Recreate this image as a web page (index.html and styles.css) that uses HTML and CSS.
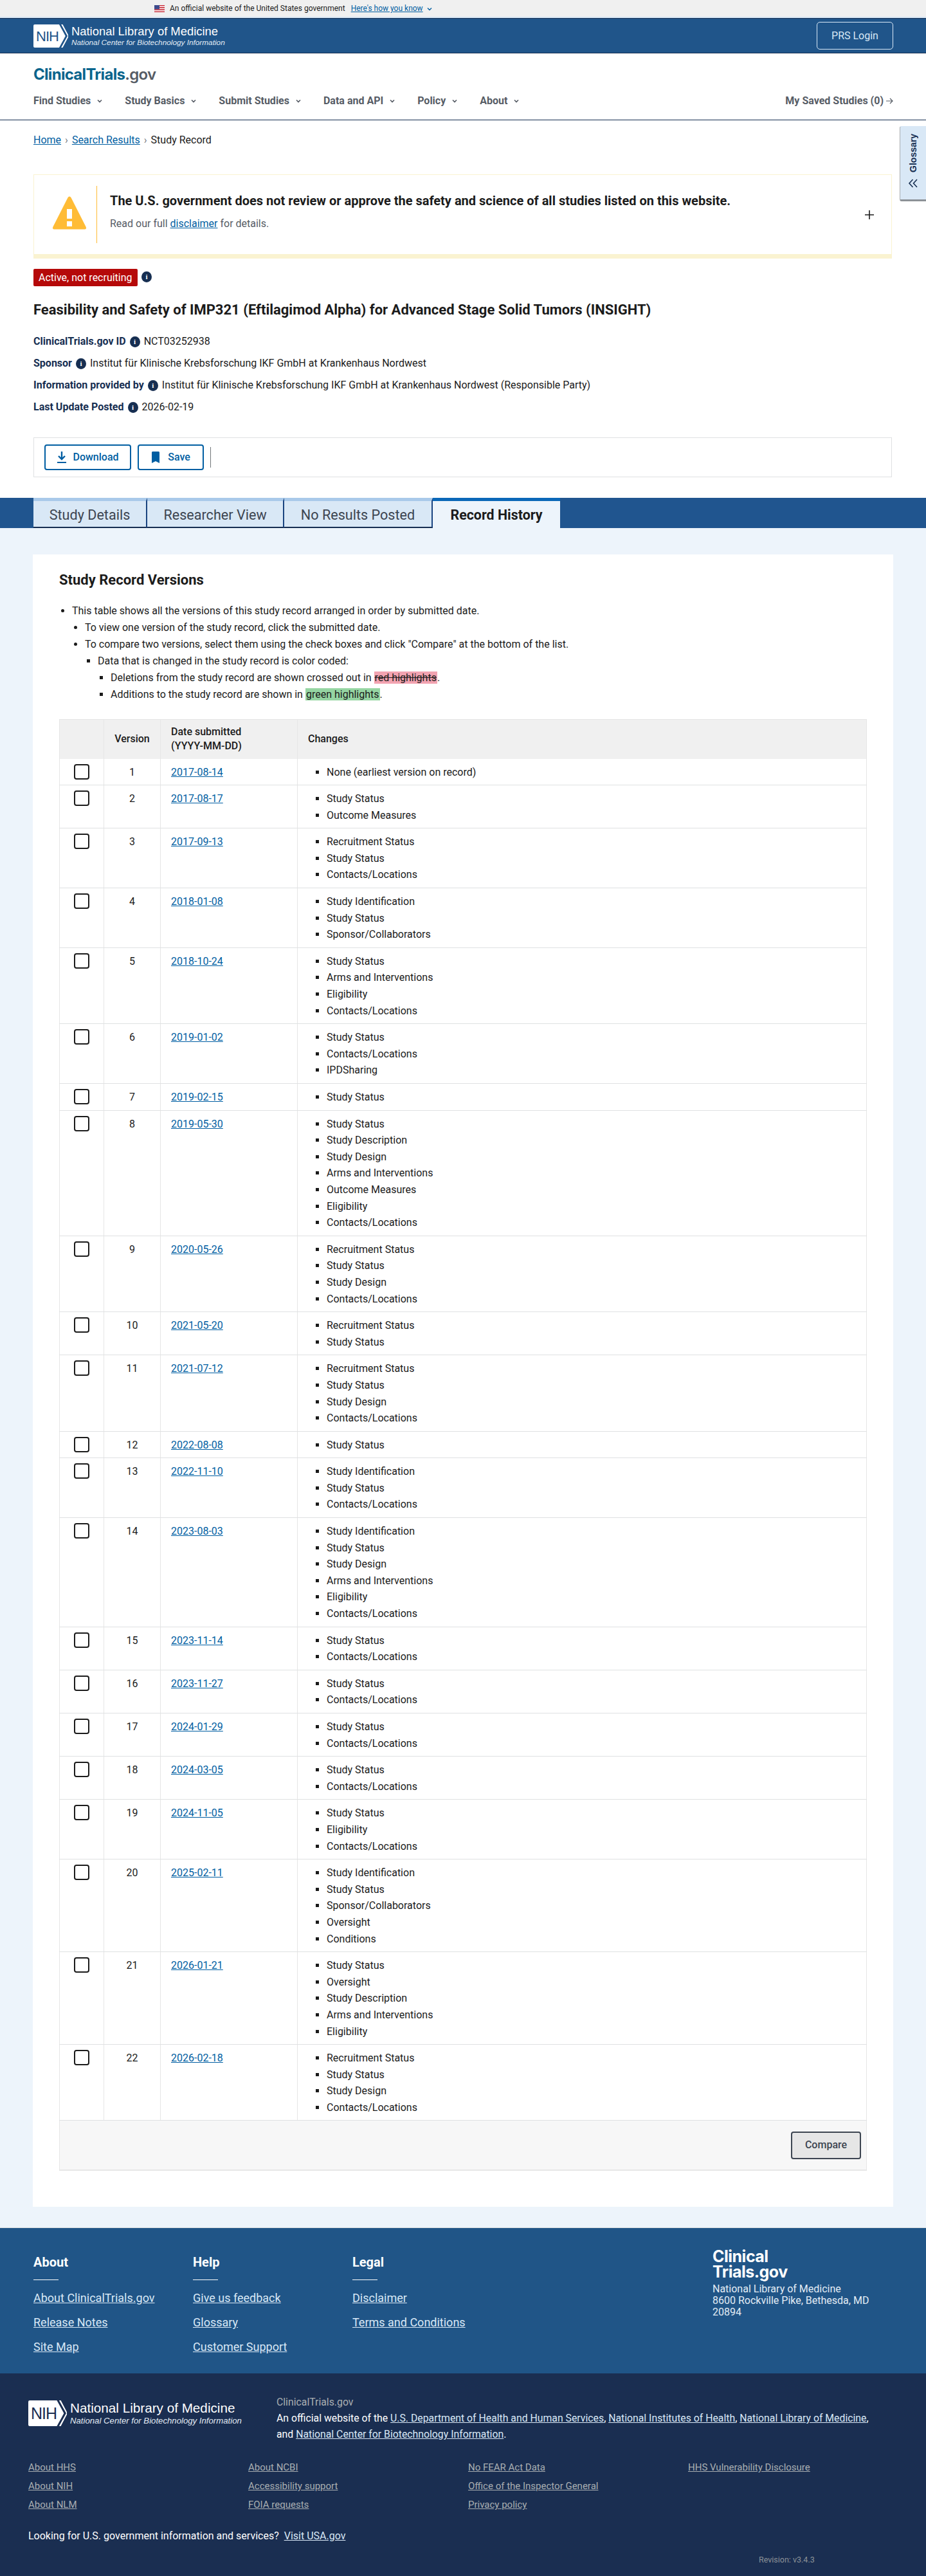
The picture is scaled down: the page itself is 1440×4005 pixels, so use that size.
FILE: index.html
```html
<!DOCTYPE html>
<html lang="en">
<head>
<meta charset="utf-8">
<title>Study Record | ClinicalTrials.gov</title>
<link rel="stylesheet" href="styles.css">
</head>
<body>
<div class="gov-banner">
  <svg class="flag" width="16" height="11" viewBox="0 0 16 11"><rect width="16" height="11" fill="#fff"/><path d="M0 0h16v1.6H0zM0 3.1h16v1.6H0zM0 6.3h16v1.6H0zM0 9.4h16V11H0z" fill="#c8313e"/><rect width="8" height="6.3" fill="#3c4a8c"/></svg>
  <span class="gov-text">An official website of the United States government</span>
  <a class="gov-link" href="#">Here's how you know</a>
  <svg class="gov-chev" width="10" height="10" viewBox="0 0 10 10"><path d="M2 3.5l3 3 3-3" fill="none" stroke="#005ea2" stroke-width="1.4"/></svg>
</div>
<header class="nih-bar">
  <div class="nih-logo">
    <div class="nih-mark">
      <svg class="nih-svg" width="54" height="36" viewBox="0 0 54 36"><path d="M2 0h38l10 18-10 18H2a2 2 0 0 1-2-2V2a2 2 0 0 1 2-2z" fill="#fff"/><path d="M42-1l10.500 19L42 37h3l10-19L45-1z" fill="#fff"/><path d="M40-1h2.500l10.500 19-10.500 19H40l10-19z" fill="#20558a"/></svg>
      <span class="nih-letters">NIH</span>
    </div>
    <div class="nih-words">
      <div class="nih-title">National Library of Medicine</div>
      <div class="nih-sub">National Center for Biotechnology Information</div>
    </div>
  </div>
  <a class="prs" href="#">PRS Login</a>
</header>
<div class="site-head">
  <div class="brand"><span class="brand-main">ClinicalTrials</span><span class="brand-gov">.gov</span></div>
  <nav class="main-nav">
    <a class="nav-item nav-find" href="#">Find Studies<svg class="chev" width="10" height="10" viewBox="0 0 10 10"><path d="M2 3.500l3 3 3-3" fill="none" stroke="#565c65" stroke-width="1.700"/></svg></a>
    <a class="nav-item nav-basics" href="#">Study Basics<svg class="chev" width="10" height="10" viewBox="0 0 10 10"><path d="M2 3.500l3 3 3-3" fill="none" stroke="#565c65" stroke-width="1.700"/></svg></a>
    <a class="nav-item nav-submit" href="#">Submit Studies<svg class="chev" width="10" height="10" viewBox="0 0 10 10"><path d="M2 3.500l3 3 3-3" fill="none" stroke="#565c65" stroke-width="1.700"/></svg></a>
    <a class="nav-item nav-data" href="#">Data and API<svg class="chev" width="10" height="10" viewBox="0 0 10 10"><path d="M2 3.500l3 3 3-3" fill="none" stroke="#565c65" stroke-width="1.700"/></svg></a>
    <a class="nav-item nav-policy" href="#">Policy<svg class="chev" width="10" height="10" viewBox="0 0 10 10"><path d="M2 3.500l3 3 3-3" fill="none" stroke="#565c65" stroke-width="1.700"/></svg></a>
    <a class="nav-item" href="#">About<svg class="chev" width="10" height="10" viewBox="0 0 10 10"><path d="M2 3.500l3 3 3-3" fill="none" stroke="#565c65" stroke-width="1.700"/></svg></a>
    <a class="nav-saved" href="#">My Saved Studies (0)<svg class="arrow" width="12" height="12" viewBox="0 0 12 12"><path d="M1 6h10M7 2l4 4-4 4" fill="none" stroke="#565c65" stroke-width="1.200"/></svg></a>
  </nav>
</div>
<aside class="glossary">
  <span class="glossary-text">Glossary</span>
  <svg width="16" height="16" viewBox="0 0 16 16"><path d="M7.500 2L2 8l5.500 6M14 2L8.500 8l5.500 6" fill="none" stroke="#162e51" stroke-width="1.600"/></svg>
</aside>
<main class="top">
  <div class="crumbs"><a href="#">Home</a><span class="sep">›</span><a href="#">Search Results</a><span class="sep">›</span><span>Study Record</span></div>
  <section class="alert">
    <svg class="alert-icon" width="52" height="52" viewBox="0 0 52 52"><path d="M26 1c1 0 1.600.5 2 1.200l23.500 46.300c.8 1.500 0 2.500-1.500 2.500H2c-1.500 0-2.300-1-1.500-2.500L24 2.200C24.400 1.500 25 1 26 1z" fill="#ffbc36" stroke="#ffbc36"/><rect x="22" y="20" width="8" height="15" fill="#fff"/><rect x="22" y="39" width="8" height="8" fill="#fff"/></svg>
    <div class="alert-body">
      <div class="alert-title">The U.S. government does not review or approve the safety and science of all studies listed on this website.</div>
      <div class="alert-sub">Read our full <a href="#">disclaimer</a> for details.</div>
    </div>
    <svg class="alert-plus" width="16" height="16" viewBox="0 0 16 16"><path d="M8 1v14M1 8h14" stroke="#1b1b1b" stroke-width="1.600"/></svg>
  </section>
  <div class="status-row"><span class="badge">Active, not recruiting</span><span class="info">i</span></div>
  <h1 class="title">Feasibility and Safety of IMP321 (Eftilagimod Alpha) for Advanced Stage Solid Tumors (INSIGHT)</h1>
  <div class="meta">
    <div class="meta-row"><span class="meta-label">ClinicalTrials.gov ID</span><span class="info">i</span><span>NCT03252938</span></div>
    <div class="meta-row"><span class="meta-label">Sponsor</span><span class="info">i</span><span>Institut für Klinische Krebsforschung IKF GmbH at Krankenhaus Nordwest</span></div>
    <div class="meta-row"><span class="meta-label">Information provided by</span><span class="info">i</span><span>Institut für Klinische Krebsforschung IKF GmbH at Krankenhaus Nordwest (Responsible Party)</span></div>
    <div class="meta-row"><span class="meta-label">Last Update Posted</span><span class="info">i</span><span>2026-02-19</span></div>
  </div>
  <div class="actions">
    <button class="btn btn-dl"><svg width="16" height="20" viewBox="0 0 16 20"><path d="M8 1v11M3 8l5 5 5-5" fill="none" stroke="#005ea2" stroke-width="2.400"/><path d="M1 18h14" stroke="#005ea2" stroke-width="2"/></svg>Download</button>
    <button class="btn btn-save"><svg width="14" height="18" viewBox="0 0 14 18"><path d="M1 1.500C1 .7 1.700 0 2.500 0h9c.8 0 1.500.7 1.500 1.500V18l-6-3-6 3z" fill="#005ea2"/></svg>Save</button>
    <span class="act-div"></span>
  </div>
</main>
<div class="tabs">
  <a class="tab tab-details" href="#">Study Details</a>
  <a class="tab tab-researcher" href="#">Researcher View</a>
  <a class="tab tab-results" href="#">No Results Posted</a>
  <a class="tab tab-active" href="#">Record History</a>
</div>
<div class="page">
  <section class="card">
    <h2 class="card-title">Study Record Versions</h2>
    <ul class="lvl">
      <li>This table shows all the versions of this study record arranged in order by submitted date.
        <ul class="lvl">
          <li>To view one version of the study record, click the submitted date.</li>
          <li>To compare two versions, select them using the check boxes and click "Compare" at the bottom of the list.
            <ul class="lvl lvl-sq">
              <li>Data that is changed in the study record is color coded:
                <ul class="lvl lvl-sq">
                  <li>Deletions from the study record are shown crossed out in <span class="del">red highlights</span>.</li>
                  <li>Additions to the study record are shown in <span class="add">green highlights</span>.</li>
                </ul>
              </li>
            </ul>
          </li>
        </ul>
      </li>
    </ul>
    <table class="versions">
      <thead>
        <tr><th class="c-check"></th><th class="c-ver">Version</th><th class="c-date">Date submitted<br>(YYYY-MM-DD)</th><th>Changes</th></tr>
      </thead>
      <tbody>
        <tr><td class="c-check"><span class="box"></span></td><td class="c-ver">1</td><td><a href="#">2017-08-14</a></td><td><ul><li>None (earliest version on record)</li></ul></td></tr>
        <tr><td class="c-check"><span class="box"></span></td><td class="c-ver">2</td><td><a href="#">2017-08-17</a></td><td><ul><li>Study Status</li><li>Outcome Measures</li></ul></td></tr>
        <tr><td class="c-check"><span class="box"></span></td><td class="c-ver">3</td><td><a href="#">2017-09-13</a></td><td><ul><li>Recruitment Status</li><li>Study Status</li><li>Contacts/Locations</li></ul></td></tr>
        <tr><td class="c-check"><span class="box"></span></td><td class="c-ver">4</td><td><a href="#">2018-01-08</a></td><td><ul><li>Study Identification</li><li>Study Status</li><li>Sponsor/Collaborators</li></ul></td></tr>
        <tr><td class="c-check"><span class="box"></span></td><td class="c-ver">5</td><td><a href="#">2018-10-24</a></td><td><ul><li>Study Status</li><li>Arms and Interventions</li><li>Eligibility</li><li>Contacts/Locations</li></ul></td></tr>
        <tr><td class="c-check"><span class="box"></span></td><td class="c-ver">6</td><td><a href="#">2019-01-02</a></td><td><ul><li>Study Status</li><li>Contacts/Locations</li><li>IPDSharing</li></ul></td></tr>
        <tr><td class="c-check"><span class="box"></span></td><td class="c-ver">7</td><td><a href="#">2019-02-15</a></td><td><ul><li>Study Status</li></ul></td></tr>
        <tr><td class="c-check"><span class="box"></span></td><td class="c-ver">8</td><td><a href="#">2019-05-30</a></td><td><ul><li>Study Status</li><li>Study Description</li><li>Study Design</li><li>Arms and Interventions</li><li>Outcome Measures</li><li>Eligibility</li><li>Contacts/Locations</li></ul></td></tr>
        <tr><td class="c-check"><span class="box"></span></td><td class="c-ver">9</td><td><a href="#">2020-05-26</a></td><td><ul><li>Recruitment Status</li><li>Study Status</li><li>Study Design</li><li>Contacts/Locations</li></ul></td></tr>
        <tr><td class="c-check"><span class="box"></span></td><td class="c-ver">10</td><td><a href="#">2021-05-20</a></td><td><ul><li>Recruitment Status</li><li>Study Status</li></ul></td></tr>
        <tr><td class="c-check"><span class="box"></span></td><td class="c-ver">11</td><td><a href="#">2021-07-12</a></td><td><ul><li>Recruitment Status</li><li>Study Status</li><li>Study Design</li><li>Contacts/Locations</li></ul></td></tr>
        <tr><td class="c-check"><span class="box"></span></td><td class="c-ver">12</td><td><a href="#">2022-08-08</a></td><td><ul><li>Study Status</li></ul></td></tr>
        <tr><td class="c-check"><span class="box"></span></td><td class="c-ver">13</td><td><a href="#">2022-11-10</a></td><td><ul><li>Study Identification</li><li>Study Status</li><li>Contacts/Locations</li></ul></td></tr>
        <tr><td class="c-check"><span class="box"></span></td><td class="c-ver">14</td><td><a href="#">2023-08-03</a></td><td><ul><li>Study Identification</li><li>Study Status</li><li>Study Design</li><li>Arms and Interventions</li><li>Eligibility</li><li>Contacts/Locations</li></ul></td></tr>
        <tr><td class="c-check"><span class="box"></span></td><td class="c-ver">15</td><td><a href="#">2023-11-14</a></td><td><ul><li>Study Status</li><li>Contacts/Locations</li></ul></td></tr>
        <tr><td class="c-check"><span class="box"></span></td><td class="c-ver">16</td><td><a href="#">2023-11-27</a></td><td><ul><li>Study Status</li><li>Contacts/Locations</li></ul></td></tr>
        <tr><td class="c-check"><span class="box"></span></td><td class="c-ver">17</td><td><a href="#">2024-01-29</a></td><td><ul><li>Study Status</li><li>Contacts/Locations</li></ul></td></tr>
        <tr><td class="c-check"><span class="box"></span></td><td class="c-ver">18</td><td><a href="#">2024-03-05</a></td><td><ul><li>Study Status</li><li>Contacts/Locations</li></ul></td></tr>
        <tr><td class="c-check"><span class="box"></span></td><td class="c-ver">19</td><td><a href="#">2024-11-05</a></td><td><ul><li>Study Status</li><li>Eligibility</li><li>Contacts/Locations</li></ul></td></tr>
        <tr><td class="c-check"><span class="box"></span></td><td class="c-ver">20</td><td><a href="#">2025-02-11</a></td><td><ul><li>Study Identification</li><li>Study Status</li><li>Sponsor/Collaborators</li><li>Oversight</li><li>Conditions</li></ul></td></tr>
        <tr><td class="c-check"><span class="box"></span></td><td class="c-ver">21</td><td><a href="#">2026-01-21</a></td><td><ul><li>Study Status</li><li>Oversight</li><li>Study Description</li><li>Arms and Interventions</li><li>Eligibility</li></ul></td></tr>
        <tr><td class="c-check"><span class="box"></span></td><td class="c-ver">22</td><td><a href="#">2026-02-18</a></td><td><ul><li>Recruitment Status</li><li>Study Status</li><li>Study Design</li><li>Contacts/Locations</li></ul></td></tr>
      </tbody>
    </table>
    <div class="compare-bar"><button class="compare">Compare</button></div>
  </section>
</div>
<footer>
  <div class="foot-blue">
    <div class="foot-col foot-about">
      <h3>About</h3>
      <a href="#">About ClinicalTrials.gov</a>
      <a href="#">Release Notes</a>
      <a href="#">Site Map</a>
    </div>
    <div class="foot-col foot-help">
      <h3>Help</h3>
      <a href="#">Give us feedback</a>
      <a href="#">Glossary</a>
      <a href="#">Customer Support</a>
    </div>
    <div class="foot-col foot-legal">
      <h3>Legal</h3>
      <a href="#">Disclaimer</a>
      <a href="#">Terms and Conditions</a>
    </div>
    <div class="foot-addr">
      <div class="foot-brand">Clinical<br>Trials.gov</div>
      <div class="foot-lines">National Library of Medicine<br>8600 Rockville Pike, Bethesda, MD<br>20894</div>
    </div>
  </div>
  <div class="foot-dark">
    <div class="fd-top">
      <div class="nih-logo fd-logo">
        <div class="nih-mark">
          <svg class="nih-svg" width="60" height="40" viewBox="0 0 54 36"><path d="M2 0h38l10 18-10 18H2a2 2 0 0 1-2-2V2a2 2 0 0 1 2-2z" fill="#fff"/><path d="M42-1l10.500 19L42 37h3l10-19L45-1z" fill="#fff"/><path d="M40-1h2.500l10.500 19-10.500 19H40l10-19z" fill="#1a2e51"/></svg>
          <span class="nih-letters nih-letters-d">NIH</span>
        </div>
        <div class="nih-words">
          <div class="nih-title fd-title">National Library of Medicine</div>
          <div class="nih-sub fd-sub">National Center for Biotechnology Information</div>
        </div>
      </div>
      <div class="fd-text">
        <div class="fd-name">ClinicalTrials.gov</div>
        <div>An official website of the <a href="#">U.S. Department of Health and Human Services</a>, <a href="#">National Institutes of Health</a>, <a href="#">National Library of Medicine</a>,<br>and <a href="#">National Center for Biotechnology Information</a>.</div>
      </div>
    </div>
    <div class="fd-links">
      <div class="fd-col"><a href="#">About HHS</a><a href="#">About NIH</a><a href="#">About NLM</a></div>
      <div class="fd-col"><a href="#">About NCBI</a><a href="#">Accessibility support</a><a href="#">FOIA requests</a></div>
      <div class="fd-col"><a href="#">No FEAR Act Data</a><a href="#">Office of the Inspector General</a><a href="#">Privacy policy</a></div>
      <div class="fd-col"><a href="#">HHS Vulnerability Disclosure</a></div>
    </div>
    <div class="fd-usa">Looking for U.S. government information and services? <a href="#">Visit USA.gov</a></div>
    <div class="fd-rev">Revision: v3.4.3</div>
  </div>
</footer>
</body>
</html>
```

FILE: styles.css
```css
* { box-sizing: border-box; }
html, body { margin: 0; padding: 0; }
body { position: relative; font-family: Roboto, "Liberation Sans", sans-serif; font-size: 16px; line-height: 26px; color: #1b1b1b; background: #fff; }
a { color: #005ea2; }

.gov-banner { height: 28px; background: #f0f0f0; border-bottom: 2px solid #d9e8f6; display: flex; align-items: center; padding-left: 240px; font-size: 12px; line-height: 16px; }
.flag { margin-right: 8px; }
.gov-text { color: #1b1b1b; margin-right: 9px; }
.gov-link { margin-right: 5px; }
.gov-chev { margin-top: 2px; }

.nih-bar { height: 55px; background: #20558a; border-top: 1px solid #162e51; border-bottom: 1px solid #162e51; display: flex; align-items: center; justify-content: space-between; padding: 0 51px 0 52px; }
.nih-logo { display: flex; align-items: center; }
.nih-mark { position: relative; width: 54px; height: 36px; }
.nih-svg { display: block; }
.nih-letters { position: absolute; left: 4px; top: 7px; font: 400 22px/24px "Liberation Sans", sans-serif; letter-spacing: -1px; color: #20558a; }
.nih-words { margin-left: 5px; color: #fff; font-family: "Liberation Sans", sans-serif; }
.nih-title { font-size: 18.400px; line-height: 21px; white-space: nowrap; }
.nih-sub { font-size: 11.800px; line-height: 14px; font-style: italic; color: #e3ecf5; white-space: nowrap; }
.prs { width: 119px; height: 43px; border: 1px solid #d9e8f6; border-radius: 5px; color: #d9e8f6; font-size: 16px; line-height: 41px; text-align: center; text-decoration: none; }

.site-head { height: 104px; border-bottom: 1px solid #162e51; padding: 17px 51px 0 52px; }
.brand { font-family: Inter, "Liberation Sans", sans-serif; font-size: 24px; line-height: 32px; font-weight: 700; letter-spacing: -0.700px; }
.brand-main { color: #08648c; }
.brand-gov { color: #565c65; font-weight: 600; }
.main-nav { display: flex; align-items: center; margin-top: 12px; }
.nav-item { color: #565c65; font-weight: 700; text-decoration: none; white-space: nowrap; margin-right: 34px; display: flex; align-items: center; }
.chev { margin-left: 9px; }
.nav-saved { margin-left: auto; color: #565c65; font-weight: 700; text-decoration: none; display: flex; align-items: center; }
.arrow { margin-left: 3px; }

.glossary { position: absolute; top: 196px; right: 0; width: 41px; height: 117px; background: #d9e8f6; border-left: 1px solid #a9aeb1; border-bottom: 3px solid #8d9297; border-top: 1px solid #d9e8f6; border-radius: 3px 0 0 3px; display: flex; flex-direction: column; align-items: center; padding-top: 11px; gap: 9px; }
.glossary-text { writing-mode: vertical-rl; transform: rotate(180deg); font: 700 14px/16px "Liberation Sans", sans-serif; color: #162e51; }

.top { padding: 0 53px 0 52px; }
.crumbs { padding-top: 18px; height: 84px; display: flex; align-items: flex-start; line-height: 26px; color: #1b1b1b; }
.sep { color: #71767a; margin: 0 6px; }

.alert { position: relative; height: 131px; background: #fff; border: 1px solid #faf3d1; border-bottom: 7px solid #faf3d1; display: flex; align-items: flex-start; padding: 17px 0 0 29px; }
.alert-icon { margin-top: 16px; flex: none; }
.alert-body { border-left: 1px solid #ffbc36; margin-left: 16px; padding-left: 20px; height: 89px; }
.alert-title { font-size: 20px; line-height: 26px; font-weight: 700; color: #1b1b1b; margin-top: 10px; }
.alert-sub { font-size: 16px; line-height: 24px; color: #565c65; margin-top: 11px; }
.alert-plus { position: absolute; right: 26px; top: 54px; }

.status-row { display: flex; align-items: center; margin-top: 16px; gap: 6px; }
.badge { height: 27px; width: 162px; background: #b50909; color: #fff; font-size: 16px; line-height: 27px; padding-left: 8px; border-radius: 2px; white-space: nowrap; }
.info { width: 16px; height: 17px; border-radius: 50%; background: #162e51; color: #fff; font: 700 11px/17px "Liberation Serif", serif; text-align: center; flex: none; }
.status-row .info { margin-top: -3px; }
.title { font-size: 22px; line-height: 30px; font-weight: 700; color: #1b1b1b; margin: 22px 0 0; }
.meta { margin-top: 17px; }
.meta-row { height: 34px; display: flex; align-items: center; gap: 6px; color: #1b1b1b; }
.meta-label { color: #162e51; font-weight: 700; }
.actions { margin-top: 30px; height: 62px; border: 1px solid #dfe1e2; display: flex; align-items: center; padding-left: 16px; }
.btn { height: 40px; background: #fff; border: 2px solid #005ea2; border-radius: 4px; color: #005ea2; font: 500 16px/20px Roboto, sans-serif; display: flex; align-items: center; justify-content: center; padding: 0; }
.btn-dl { width: 135px; gap: 9px; margin-right: 10px; }
.btn-save { width: 103px; gap: 12px; margin-right: 10px; }
.act-div { width: 1px; height: 32px; background: #71767a; }

.tabs { margin-top: 32px; height: 47px; background: #20558f; display: flex; padding-left: 52px; }
.tab { height: 47px; padding: 5px 0 0; background: #d9e8f6; border-top: 5px solid #a9c9ea; border-right: 2px solid #1a4480; border-bottom: 2px solid #162e51; color: #3d4551; font-size: 21.600px; line-height: 33px; text-align: center; text-decoration: none; white-space: nowrap; flex: none; }
.tab-details { width: 177px; }
.tab-researcher { width: 213px; }
.tab-results { width: 231px; }
.tab-active { width: 198px; background: #edf4fb; border-top: 5px solid #0b68b8; border-right: 0; border-bottom: 0; color: #1b1b1b; font-weight: 700; height: 48px; font-size: 21.400px; }

.page { background: #edf4fb; padding: 41px 52px 32px; border-bottom: 1px solid #dfe1e2; }
.card { background: #fff; margin: 0 -1px; padding: 24px 41px 56px 41px; }
.card-title { font-size: 22px; line-height: 32px; font-weight: 700; margin: 0 0 19px; color: #1b1b1b; }
.lvl { margin: 0; padding-left: 20px; list-style: disc; }
.lvl .lvl { padding-left: 20px; }
.lvl-sq { list-style: square; }
.del { background: #f2a3b1; text-decoration: line-through; padding: 0 1px; }
.add { background: #95d5a2; padding: 0 1px; }

.versions { width: 100%; margin-top: 25px; border-collapse: collapse; table-layout: fixed; border: 1px solid #e6e6e6; }
.versions th { background: #f0f0f0; height: 61px; text-align: left; font-weight: 500; line-height: 22px; padding: 0 16px; border-right: 1px solid #e6e6e6; color: #1b1b1b; }
.versions td { padding: 8px 16px 7px; vertical-align: top; border-right: 1px solid #e6e6e6; border-bottom: 1px solid #dfe1e2; line-height: 25.600px; color: #1b1b1b; }
.versions .c-check { width: 69px; padding: 0; text-align: center; }
.versions .c-ver { width: 88px; text-align: center; }
.versions .c-date { width: 213px; }
.versions ul { margin: 0; padding-left: 29px; list-style: square; }
.box { display: block; width: 24px; height: 24px; margin: 8px auto 0; border: 2px solid #1b1b1b; border-radius: 4px; background: #fff; }
.compare-bar { height: 78px; background: #f7f7f7; border: 1px solid #e6e6e6; border-top: 0; border-bottom: 2px solid #e6e6e6; display: flex; align-items: center; justify-content: flex-end; padding-right: 8px; }
.compare { width: 109px; height: 43px; background: #e6e6e6; border: 2px solid #3d4551; border-radius: 4px; color: #3d4551; font: 500 16px/20px Roboto, sans-serif; }

.foot-blue { height: 226px; background: #205587; display: flex; padding: 37px 0 0 52px; position: relative; }
.foot-col { display: flex; flex-direction: column; align-items: flex-start; flex: none; }
.foot-about { width: 248px; }
.foot-help { width: 248px; }
.foot-legal { width: 560px; }
.foot-col h3 { font-size: 20px; line-height: 32px; font-weight: 700; color: #fff; margin: 0 0 16px; padding-bottom: 12px; position: relative; }
.foot-col h3::after { content: ""; position: absolute; left: 0; bottom: 0; width: 39px; height: 1px; background: #fff; }
.foot-col a { color: #d9e8f6; font-size: 18px; line-height: 24px; margin-bottom: 14px; }
.foot-addr { color: #e3ecf5; margin-top: -5px; }
.foot-brand { font-family: Inter, "Liberation Sans", sans-serif; font-size: 25px; line-height: 24px; font-weight: 700; color: #fff; letter-spacing: -0.500px; }
.foot-lines { font-size: 16px; line-height: 18px; margin-top: 6px; }

.foot-dark { height: 316px; background: #1a2e51; padding: 32px 44px 0; position: relative; color: #fff; }
.fd-top { display: flex; }
.fd-logo { width: 386px; flex: none; align-items: flex-start; padding-top: 10px; }
.fd-logo .nih-mark { width: 60px; height: 40px; }
.nih-letters-d { left: 4px; top: 8px; color: #1a2e51; font-size: 25px; }
.fd-title { font-size: 20.700px; line-height: 24px; }
.fd-sub { font-size: 13.200px; line-height: 16px; }
.fd-text { font-size: 15.800px; line-height: 25px; color: #fff; }
.fd-text a { color: #d9e8f6; }
.fd-name { color: #a9aeb1; }
.fd-links { display: flex; margin-top: 25px; }
.fd-col { width: 342px; flex: none; display: flex; flex-direction: column; align-items: flex-start; }
.fd-col a { color: #a9aeb1; font-size: 15px; line-height: 29px; }
.fd-usa { margin-top: 21px; font-size: 16px; line-height: 26px; color: #fff; }
.fd-usa a { color: #d9e8f6; margin-left: 4px; }
.fd-rev { position: absolute; left: 1180px; top: 281px; font-size: 12.500px; line-height: 18px; color: #8d9297; }
```
